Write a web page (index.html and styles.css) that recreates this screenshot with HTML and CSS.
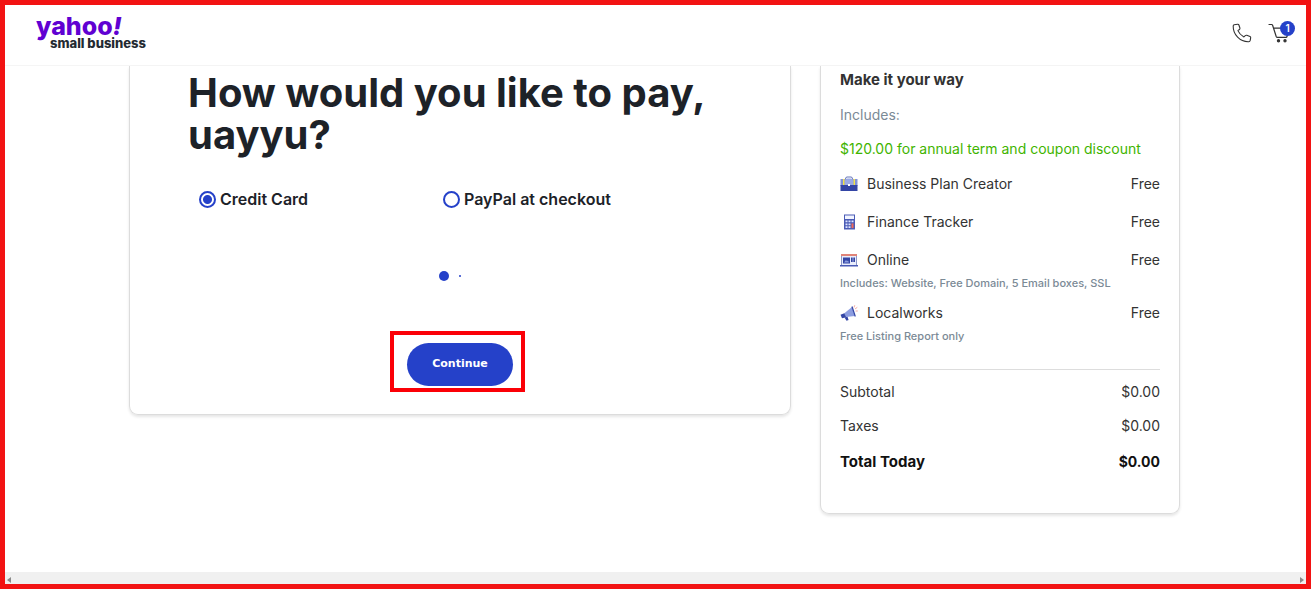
FILE: index.html
```
<!DOCTYPE html>
<html lang="en">
<head>
  <meta charset="UTF-8">
  <meta name="viewport" content="width=device-width, initial-scale=1">
  <title>Checkout - Yahoo Small Business</title>
  <link rel="stylesheet" href="styles.css">
</head>
<body>
  <header class="header">
    <a href="#" class="logo">
      <span class="logo-name">yahoo<i>!</i></span>
      <span class="logo-sub">small business</span>
    </a>
    <nav class="header-actions">
      <a href="#" class="icon-link" aria-label="Call us">
        <svg width="20" height="20" viewBox="0 0 20 20" fill="none" stroke="#333" stroke-width="1.1" stroke-linejoin="round">
          <path d="M2.2 1.8 L5.6 1.2 Q6.6 1.1 6.9 2 L7.9 5 Q8.2 5.9 7.4 6.5 L5.9 7.6 Q7.6 11.6 11.9 13.9 L13.3 12.6 Q14 12 14.8 12.3 L18 13.5 Q18.8 13.9 18.7 14.7 L18.2 17.4 Q17.9 18.6 16.7 18.7 C8 19 1 11.5 1.2 3 Q1.3 2 2.2 1.8 Z"/>
        </svg>
      </a>
      <a href="#" class="icon-link cart" aria-label="Cart">
        <svg width="22" height="20" viewBox="0 0 22 20" fill="none" stroke="#333" stroke-width="1.2" stroke-linecap="round" stroke-linejoin="round">
          <path d="M1 1.5 H3.6 Q4.3 1.5 4.6 2.2 L8.2 13.5 Q8.5 14.3 9.4 14.3 H18 Q18.8 14.3 19 13.5 L20.5 8 M5.6 5.2 H14"/>
          <circle cx="10.5" cy="17.8" r="1.1" fill="#333"/>
          <circle cx="17" cy="17.8" r="1.1" fill="#333"/>
        </svg>
        <span class="badge">1</span>
      </a>
    </nav>
  </header>

  <main class="checkout">
    <form class="card payment">
      <h1>How would you like to pay, uayyu?</h1>
      <div class="methods">
        <label for="card"><input type="radio" id="card" name="method" checked>Credit Card</label>
        <label for="paypal"><input type="radio" id="paypal" name="method">PayPal at checkout</label>
      </div>
      <div class="loader">
        <span class="dot"></span>
        <span class="dot dot-small"></span>
      </div>
      <div class="submit">
        <button type="button">Continue</button>
      </div>
    </form>

    <aside class="card summary">
      <h2>Make it your way</h2>
      <p class="includes">Includes:</p>
      <p class="discount">$120.00 for annual term and coupon discount</p>

      <ul class="items">
        <li>
          <div class="row">
            <svg width="18" height="18" viewBox="0 0 18 18">
              <path d="M5.5 4 Q5.5 2 7 2 H11 Q12.5 2 12.5 4" fill="none" stroke="#6676b8"/>
              <rect x="0.5" y="4" width="17" height="7" fill="#8292d8"/>
              <path d="M5 10 V6 Q5 3.5 7.5 3.5 H10.5 Q13 3.5 13 6 V10 Z" fill="#9baae6"/>
              <rect x="0.5" y="10" width="17" height="6" fill="#3345a5"/>
              <path d="M3 4 H4.5 V10 H3 Z M13.5 4 H15 V10 H13.5 Z" fill="#f3e34a"/>
              <rect x="8" y="9" width="2" height="2" fill="#fff"/>
            </svg>
            <span>Business Plan Creator</span>
            <span class="price">Free</span>
          </div>
        </li>
        <li>
          <div class="row">
            <svg width="18" height="18" viewBox="0 0 18 18">
              <rect x="4" y="1.5" width="11" height="15" fill="#4a5bb5"/>
              <rect x="5" y="2.5" width="9" height="3.5" fill="#f2f5ff"/>
              <path d="M5.5 7.5 H7.5 V9.3 H5.5 Z M8.5 7.5 H10.5 V9.3 H8.5 Z M11.5 7.5 H13.5 V9.3 H11.5 Z M5.5 10.4 H7.5 V12.2 H5.5 Z M8.5 10.4 H10.5 V12.2 H8.5 Z M5.5 13.3 H7.5 V15.1 H5.5 Z M8.5 13.3 H10.5 V15.1 H8.5 Z" fill="#dce3ff"/>
              <rect x="11.5" y="10.4" width="2" height="4.7" fill="#ef6b5a"/>
            </svg>
            <span>Finance Tracker</span>
            <span class="price">Free</span>
          </div>
        </li>
        <li>
          <div class="row">
            <svg width="18" height="18" viewBox="0 0 18 18">
              <rect x="1.5" y="3.5" width="15" height="11" fill="#e9edfc" stroke="#8c97c9"/>
              <rect x="1" y="3" width="16" height="2" fill="#e08478"/>
              <rect x="3" y="6.5" width="7" height="6" fill="#3345a5"/>
              <path d="M4 11.5 L6 9 L7 10.3 L8 9.5 L9 11.5 Z" fill="#8d9de0"/>
              <path d="M11 6.5 H12.7 V11 H11 Z M13.3 6.5 H15 V11 H13.3 Z" fill="#3345a5"/>
              <rect x="0" y="14" width="18" height="1.5" fill="#4a5bb5"/>
            </svg>
            <span>Online</span>
            <span class="price">Free</span>
          </div>
          <p class="note">Includes: Website, Free Domain, 5 Email boxes, SSL</p>
        </li>
        <li>
          <div class="row">
            <svg width="18" height="18" viewBox="0 0 18 18">
              <path d="M4 9.5 L12 3 L15 12 L6 13 Z" fill="#8d9de0"/>
              <path d="M12 2.5 L15.3 12.5" stroke="#3345a5" stroke-width="1.2"/>
              <path d="M0.5 10.8 L4.3 9.2 L6.2 13.2 L2 14.3 Z" fill="#3345a5"/>
              <path d="M4.5 13.5 L7.5 12.8 L8.6 16 L6.5 16.8 Z" fill="#3345a5"/>
              <path d="M14 3.5 L14.8 1.2 M15 5 L17.3 3.3 M15.6 7 H17.8" stroke="#f3a298" stroke-width="0.9"/>
            </svg>
            <span>Localworks</span>
            <span class="price">Free</span>
          </div>
          <p class="note">Free Listing Report only</p>
        </li>
      </ul>

      <div class="totals">
        <div class="row"><span>Subtotal</span><span class="price">$0.00</span></div>
        <div class="row"><span>Taxes</span><span class="price">$0.00</span></div>
        <div class="row total"><span>Total Today</span><span class="price">$0.00</span></div>
      </div>
    </aside>
  </main>

  <div class="scrollbar">
    <span class="arrow arrow-left"></span>
    <span class="arrow arrow-right"></span>
  </div>
</body>
</html>
```
FILE: styles.css
```
* {
  box-sizing: border-box;
}

body {
  display: flex;
  flex-direction: column;
  min-height: 100vh;
  margin: 0;
  border: 5px solid #f21313;
  background: #fff;
  color: #333;
  font-family: Inter, "Open Sans", sans-serif;
  font-size: 14px;
  line-height: 20px;
}

h1, h2, p, ul {
  margin: 0;
  padding: 0;
}

.header {
  display: flex;
  justify-content: space-between;
  align-items: flex-start;
  height: 61px;
  padding: 10px 11px 0 31px;
  border-bottom: 1px solid #f5f5f5;
}

.logo {
  display: flex;
  flex-direction: column;
  text-decoration: none;
}

.logo-name {
  color: #6001d2;
  font-size: 25px;
  font-weight: 800;
  line-height: 22px;
}

.logo-sub {
  padding-left: 14px;
  color: #232a31;
  font-size: 13px;
  font-weight: 800;
  line-height: 12px;
}

.header-actions {
  display: flex;
  gap: 16px;
  padding-top: 8px;
}

.icon-link {
  display: flex;
}

.cart {
  position: relative;
  padding-right: 5px;
}

.badge {
  position: absolute;
  top: -2px;
  right: 0;
  width: 15px;
  height: 15px;
  border-radius: 50%;
  background: #2541c9;
  color: #fff;
  font-size: 10px;
  font-weight: 600;
  line-height: 15px;
  text-align: center;
}

.checkout {
  display: grid;
  grid-template-columns: minmax(0, 662fr) minmax(0, 360fr);
  gap: 29px;
  flex: 1;
  align-items: start;
  width: 100%;
  max-width: 1053px;
  margin: 0 auto;
  padding-right: 2px;
}

.card {
  border: 1px solid #dcdcdc;
  border-top: 0;
  border-radius: 0 0 9px 9px;
  box-shadow: 0 2px 3px rgba(0, 0, 0, 0.1);
}

.payment {
  padding: 6px 58px 28px;
}

h1 {
  color: #1d2228;
  font-size: 40px;
  font-weight: 700;
  line-height: 42px;
}

.methods {
  display: flex;
  margin: 32px 0 61px 11px;
}

.methods label {
  display: flex;
  align-items: center;
  flex: 0 1 244px;
  color: #1d2228;
  font-size: 16px;
  font-weight: 600;
  line-height: 22px;
}

.methods input {
  appearance: none;
  width: 17px;
  height: 17px;
  margin: 0 4px 0 0;
  border: 2px solid #2541c9;
  border-radius: 50%;
}

.methods input:checked {
  background: radial-gradient(circle, #2541c9 4px, #fff 5px);
}

.loader {
  display: flex;
  justify-content: center;
  align-items: center;
  gap: 10px;
  height: 10px;
  padding-right: 20px;
  margin-bottom: 62px;
}

.dot {
  width: 10px;
  height: 10px;
  border-radius: 50%;
  background: #2541c9;
}

.dot-small {
  width: 2px;
  height: 2px;
}

.submit {
  position: relative;
  width: fit-content;
  margin: 0 auto;
}

/* highlight frame around the button */
.submit::before {
  content: "";
  position: absolute;
  inset: -12px -12px -6px -17px;
  border: 4px solid #fb0007;
}

.submit button {
  display: block;
  position: relative;
  width: 106px;
  height: 43px;
  padding: 0 0 2px;
  border: 0;
  border-radius: 22px;
  background: #2541c9;
  color: #fff;
  font-family: "DejaVu Sans", sans-serif;
  font-size: 11px;
  font-weight: 700;
}

.summary {
  padding: 4px 19px 41px;
}

h2 {
  font-size: 15px;
  font-weight: 700;
  line-height: 20px;
}

.includes {
  margin-top: 15px;
  color: #7b8a96;
}

.discount {
  margin-top: 14px;
  color: #3fb400;
}

.items {
  margin: 15px 0 25px;
  list-style: none;
}

.items li {
  margin-bottom: 12px;
}

.items li:nth-child(-n+2) {
  margin-bottom: 18px;
}

.items li:last-child {
  margin-bottom: 0;
}

.row {
  display: flex;
  align-items: center;
}

.row svg {
  margin-right: 9px;
}

.price {
  margin-left: auto;
}

.note {
  margin-top: 5px;
  color: #7b8a96;
  font-size: 11px;
  font-weight: 500;
  line-height: 16px;
}

.totals {
  display: flex;
  flex-direction: column;
  gap: 14px;
  padding-top: 12px;
  border-top: 1px solid #ddd;
}

.total {
  margin-top: 2px;
  color: #111;
  font-size: 15px;
  font-weight: 700;
}

.total .price {
  font-size: 14px;
}

.scrollbar {
  display: flex;
  justify-content: space-between;
  align-items: center;
  height: 12px;
  padding: 4px 2px 0;
  background: #f0f0f0;
}

.arrow {
  border: 3px solid transparent;
}

.arrow-left {
  border-left: 0;
  border-right: 4px solid #8a8a8a;
}

.arrow-right {
  border-right: 0;
  border-left: 4px solid #8a8a8a;
}
```
